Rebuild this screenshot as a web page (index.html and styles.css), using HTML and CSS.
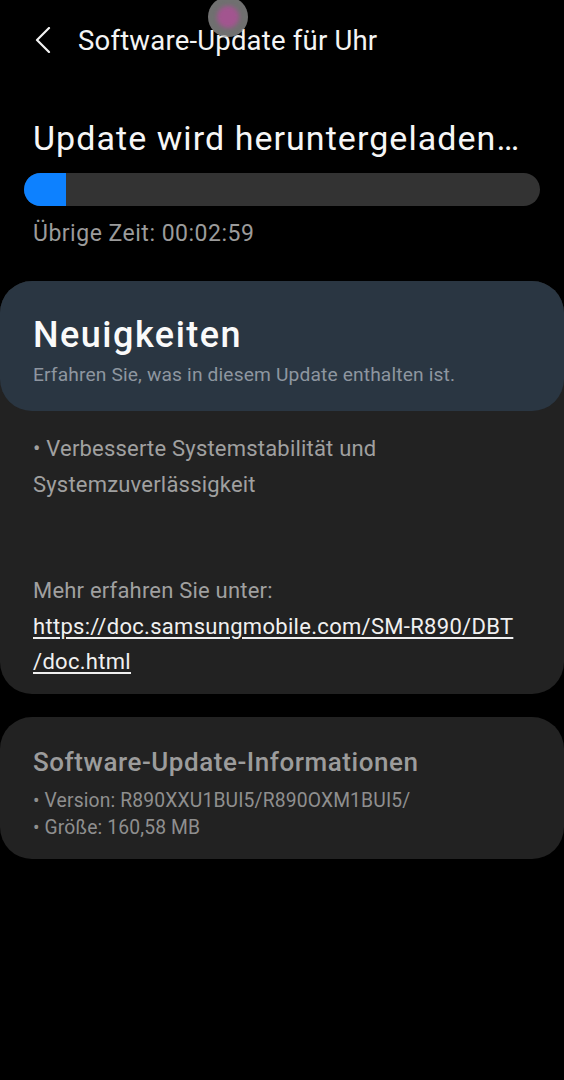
FILE: index.html
```html
<!DOCTYPE html>
<html lang="de">
<head>
<meta charset="utf-8">
<link rel="stylesheet" href="styles.css">
</head>
<body>
<header class="appbar">
  <svg class="back" width="16" height="26" viewBox="0 0 16 26"><path d="M14 1 L2 13 L14 25" fill="none" stroke="#f2f2f2" stroke-width="2.2" stroke-linecap="round" stroke-linejoin="round"/></svg>
  <h1 class="title">Software-Update für Uhr</h1>
</header>

<section class="download">
  <h2 class="status">Update wird heruntergeladen…</h2>
  <div class="track"><div class="fill"></div></div>
  <p class="remaining">Übrige Zeit: 00:02:59</p>
</section>

<section class="card news">
  <div class="news-head">
    <h2 class="news-title">Neuigkeiten</h2>
    <p class="news-sub">Erfahren Sie, was in diesem Update enthalten ist.</p>
  </div>
  <div class="news-body">
    <p>• Verbesserte Systemstabilität und Systemzuverlässigkeit</p>
    <p class="gap">Mehr erfahren Sie unter:<br><a class="link" href="#">https://doc.samsungmobile.com/SM-R890/DBT<br>/doc.html</a></p>
  </div>
</section>

<section class="card info">
  <h2 class="info-title">Software-Update-Informationen</h2>
  <p class="info-line">• Version: R890XXU1BUI5/R890OXM1BUI5/</p>
  <p class="info-line">• Größe: 160,58 MB</p>
</section>

<div class="touch"><div class="touch-dot"></div></div>
</body>
</html>
```

FILE: styles.css
```css
* { box-sizing: border-box; }
html, body { margin: 0; padding: 0; }
body {
  background: #000;
  width: 564px;
  height: 1080px;
  font-family: Roboto, "Noto Sans", sans-serif;
  color: #f2f2f2;
  position: relative;
  overflow: hidden;
}
h1, h2, p { margin: 0; font-weight: normal; }

.appbar {
  display: flex;
  align-items: center;
  height: 80px;
  padding-left: 35px;
}
.back { flex: none; }
.title {
  font-size: 27.5px;
  margin-left: 27px;
  color: #f4f4f4;
  letter-spacing: 0.2px;
}

.download { padding: 38px 24px 0 24px; }
.status {
  font-size: 34px;
  padding-left: 9px;
  color: #f6f6f6;
  line-height: 40px;
  letter-spacing: 1.05px;
  white-space: nowrap;
}
.track {
  margin-top: 15px;
  height: 33px;
  border-radius: 17px;
  background: #333333;
  overflow: hidden;
}
.fill {
  width: 42px;
  height: 100%;
  background: #0d81ff;
}
.remaining {
  font-size: 23px;
  color: #9b9b9b;
  padding-left: 9px;
  margin-top: 14px;
  line-height: 28px;
  letter-spacing: 0.5px;
}

.card {
  border-radius: 32px;
  background: #222222;
}
.news { margin-top: 33px; }
.news-head {
  background: #2a3642;
  border-radius: 32px;
  height: 130px;
  padding: 34px 33px 0 33px;
}
.news-title {
  font-size: 36px;
  font-weight: 500;
  color: #fafafa;
  line-height: 40px;
  letter-spacing: 1.5px;
}
.news-sub {
  font-size: 19.2px;
  color: #8e96a0;
  margin-top: 8px;
  line-height: 24px;
  letter-spacing: 0.15px;
}
.news-body {
  padding: 20px 33px 14px 33px;
  font-size: 22px;
  line-height: 35.5px;
  color: #a0a0a0;
  letter-spacing: 0.2px;
}
.news-body .gap { margin-top: 71px; }
.link { color: #f0f0f0; text-decoration: underline; text-underline-offset: 3px; text-decoration-thickness: 1.5px; letter-spacing: 0.3px; }

.info {
  margin-top: 23px;
  height: 142px;
  padding: 29px 33px 0 33px;
}
.info-title {
  font-size: 26px;
  font-weight: 500;
  color: #9c9c9c;
  line-height: 32px;
  letter-spacing: 0.55px;
}
.info-line {
  font-size: 19.3px;
  color: #8f8f8f;
  line-height: 27px;
  letter-spacing: 0.15px;
}
.info-title + .info-line { margin-top: 9px; }

.touch {
  position: absolute;
  left: 208px;
  top: -3px;
  width: 40px;
  height: 40px;
  border-radius: 50%;
  background: rgba(150,150,150,0.75);
  display: flex;
  align-items: center;
  justify-content: center;
}
.touch-dot {
  width: 22px;
  height: 22px;
  border-radius: 50%;
  background: #a2558f;
  filter: blur(2px);
}
```
